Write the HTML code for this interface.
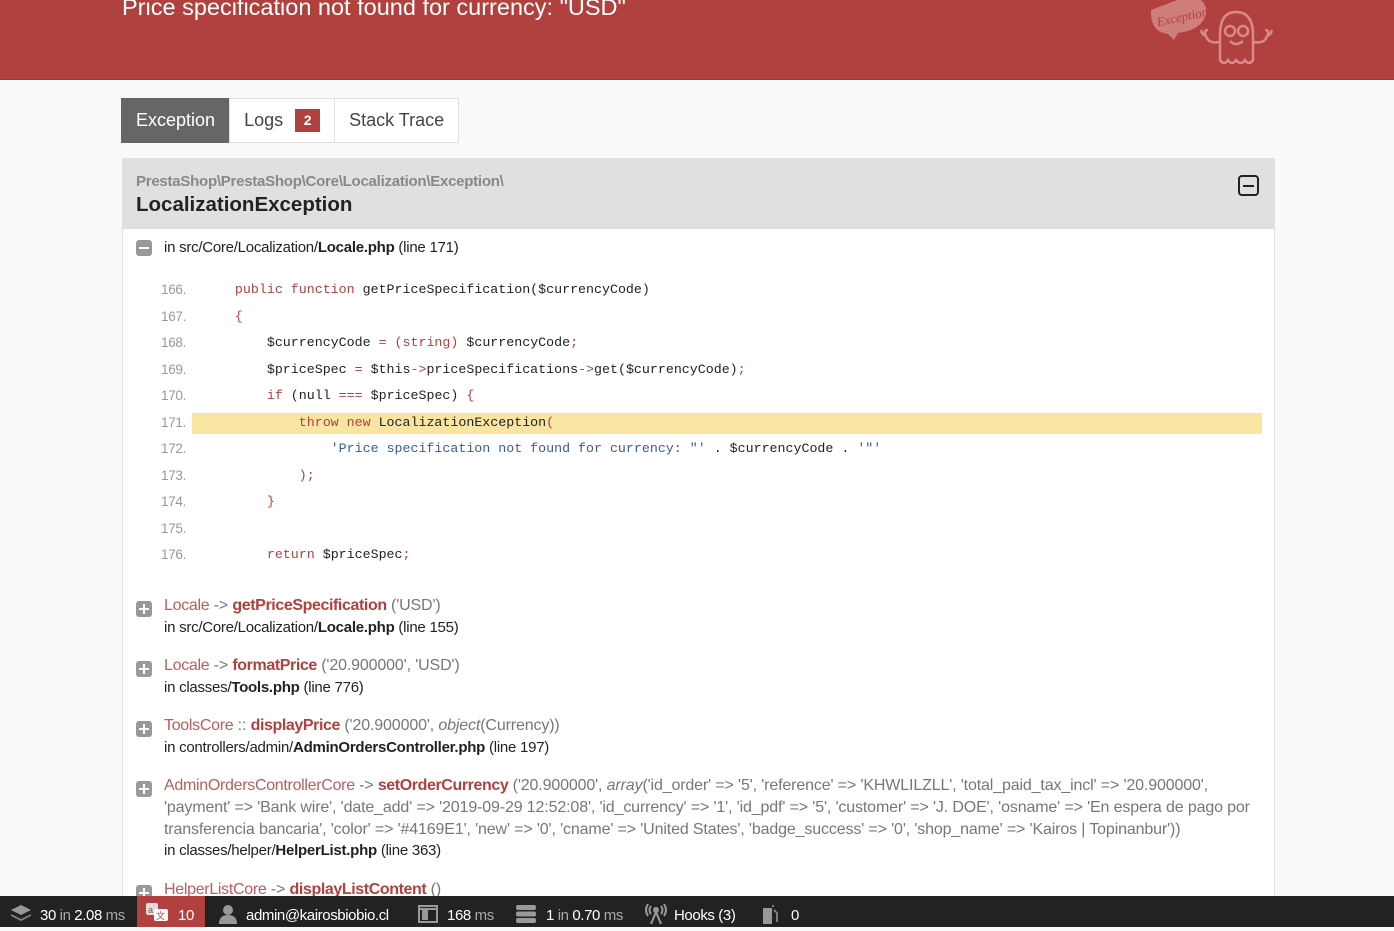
<!DOCTYPE html>
<html><head><meta charset="utf-8"><style>
*{margin:0;padding:0;box-sizing:border-box}
body{width:1394px;height:927px;overflow:hidden;background:#f9f9f9;font-family:"Liberation Sans",Arial,sans-serif;color:#222;position:relative}
.hdr{position:absolute;left:0;top:0;width:1394px;height:80px;background:#b0413e;border-bottom:1px solid #9a3a37}
.hdr h1{position:absolute;left:122px;top:-6px;color:#fff;font-size:23.5px;font-weight:normal;white-space:nowrap}
.tabs{position:absolute;left:121px;top:98px;height:45px;display:flex}
.tab{height:45px;border:1px solid #e0e0e0;background:#fff;font-size:18px;line-height:43px;padding:0 14px;color:#444;margin-left:-1px}
.tab.act{background:#666;color:#fff;border-color:#666;margin-left:0}
.badge{display:inline-block;background:#b0413e;color:#fff;font-size:14px;font-weight:bold;width:25px;height:23px;line-height:23px;text-align:center;margin-left:12px;vertical-align:1px}
.panel{position:absolute;left:122px;top:158px;width:1153px;height:760px;background:#fff;border:1px solid #e0e0e0}
.ph{height:70px;background:#e0e0e0;position:relative}
.ns{position:absolute;left:13px;top:14px;font-size:15px;color:#888;font-weight:bold;letter-spacing:-.25px}
.cls{position:absolute;left:13px;top:34px;font-size:20.5px;font-weight:bold;color:#222}
.tog{position:absolute;left:1115px;top:16px;width:21px;height:21px;border:2px solid #222;border-radius:4px}
.tog:after{content:"";position:absolute;left:3px;right:3px;top:7.5px;height:2px;background:#222}
.ico{position:absolute;left:13px;width:16px;height:16px;background:#999;border-radius:3px}
.ico:before{content:"";position:absolute;left:3px;right:3px;top:7px;height:2px;background:#fff}
.ico.p:after{content:"";position:absolute;top:3px;bottom:3px;left:7px;width:2px;background:#fff}
.t{position:absolute;left:41px;font-size:15px;white-space:nowrap;color:#222;letter-spacing:-.25px}
.code{position:absolute;left:0;top:118px;width:1153px;font-family:"Liberation Mono",monospace;font-size:13.3px}
.ln{height:26.5px;line-height:26.5px;position:relative;white-space:pre}
.ln .n{position:absolute;left:38px;color:#999;font-family:"Liberation Sans",sans-serif;font-size:13.5px;letter-spacing:-.3px}
.ln .c{position:absolute;left:80px;color:#222}
.hl{position:absolute;left:69px;width:1070px;top:3px;height:21px;background:#f7e5a1}
.k{color:#b0413e}.s{color:#3b5b9e}
.fr{position:absolute;left:0;width:1153px}
.fr .l1{position:absolute;left:41px;top:0;font-size:16px;color:#777;white-space:nowrap;letter-spacing:-.14px}
.fr .l2{position:absolute;left:41px;font-size:15px;color:#222;white-space:nowrap;letter-spacing:-.25px}
.cl{color:#b0413e;opacity:.85;letter-spacing:-.3px}.m{color:#b0413e;font-weight:bold;letter-spacing:-.4px}
.bar{position:absolute;left:0;top:896px;width:1394px;height:31px;background:#222;color:#fff;font-size:15px}
.bar span.i{position:absolute;top:4px;line-height:31px;white-space:nowrap;letter-spacing:-.4px}
.g{color:#aaa}
</style></head><body>
<div class="hdr"><h1>Price specification not found for currency: "USD"</h1>
<svg style="position:absolute;left:1148px;top:0" width="130" height="70" viewBox="0 0 130 70" fill="none" stroke="#d88a88" stroke-width="2.5">
<path d="M3 10 Q2 32 20 34 L26 40 L30 33 Q54 30 58 14 Q60 -2 40 -4 Z" fill="#cf7e7c" stroke="none"/>
<text x="8" y="22" font-family="Liberation Serif" font-style="italic" font-size="13" fill="#b0413e" stroke="none" transform="rotate(-12 30 16)">Exception!</text>
<path d="M72 60 L72 35 Q72 12 88 12 Q105 12 105 35 L105 60 Q101 66 97 60 Q93 66 88 60 Q84 66 80 60 Q76 66 72 60Z"/>
<circle cx="82" cy="31" r="5"/><circle cx="95" cy="31" r="5"/>
<path d="M82 41 Q88 47 95 41"/>
<path d="M72 42 Q60 44 58 36 M58 36 Q55 30 60 30 M58 36 Q52 33 54 30"/>
<path d="M105 42 Q117 44 119 36 M119 36 Q122 30 117 30 M119 36 Q125 33 123 30"/>
</svg></div>
<div class="tabs"><div class="tab act">Exception</div><div class="tab">Logs<span class="badge">2</span></div><div class="tab">Stack Trace</div></div>
<div class="panel">
<div class="ph"><div class="ns">PrestaShop\PrestaShop\Core\Localization\Exception\</div><div class="cls">LocalizationException</div><div class="tog"></div></div>
<div class="ico" style="top:81px"></div>
<div class="t" style="top:80px">in src/Core/Localization/<b>Locale.php</b> (line 171)</div>
<div class="code">
<div class="ln"><span class="n">166.</span><span class="c">    <span class="k">public function</span> getPriceSpecification($currencyCode)</span></div>
<div class="ln"><span class="n">167.</span><span class="c">    <span class="k">{</span></span></div>
<div class="ln"><span class="n">168.</span><span class="c">        $currencyCode <span class="k">=</span> <span class="k">(string)</span> $currencyCode<span class="k">;</span></span></div>
<div class="ln"><span class="n">169.</span><span class="c">        $priceSpec <span class="k">=</span> $this<span class="k">-&gt;</span>priceSpecifications<span class="k">-&gt;</span>get($currencyCode)<span class="k">;</span></span></div>
<div class="ln"><span class="n">170.</span><span class="c">        <span class="k">if</span> (null <span class="k">===</span> $priceSpec) <span class="k">{</span></span></div>
<div class="ln"><div class="hl"></div><span class="n">171.</span><span class="c">            <span class="k">throw new</span> LocalizationException<span class="k">(</span></span></div>
<div class="ln"><span class="n">172.</span><span class="c">                <span class="s">'Price specification not found for currency: "'</span> . $currencyCode . <span class="s">'"'</span></span></div>
<div class="ln"><span class="n">173.</span><span class="c">            <span class="k">);</span></span></div>
<div class="ln"><span class="n">174.</span><span class="c">        <span class="k">}</span></span></div>
<div class="ln"><span class="n">175.</span><span class="c"> </span></div>
<div class="ln"><span class="n">176.</span><span class="c">        <span class="k">return</span> $priceSpec<span class="k">;</span></span></div>
</div>
<div class="fr" style="top:438px"><div class="ico p" style="top:4px"></div><div class="l1"><span class="cl">Locale</span> -&gt; <span class="m">getPriceSpecification</span> ('USD')</div><div class="l2" style="top:22px">in src/Core/Localization/<b>Locale.php</b> (line 155)</div></div>
<div class="fr" style="top:498px"><div class="ico p" style="top:4px"></div><div class="l1"><span class="cl">Locale</span> -&gt; <span class="m">formatPrice</span> ('20.900000', 'USD')</div><div class="l2" style="top:22px">in classes/<b>Tools.php</b> (line 776)</div></div>
<div class="fr" style="top:558px"><div class="ico p" style="top:4px"></div><div class="l1"><span class="cl">ToolsCore</span> :: <span class="m">displayPrice</span> ('20.900000', <i>object</i>(Currency))</div><div class="l2" style="top:22px">in controllers/admin/<b>AdminOrdersController.php</b> (line 197)</div></div>
<div class="fr" style="top:618px"><div class="ico p" style="top:4px"></div><div class="l1" style="line-height:22px;top:-2px"><span class="cl">AdminOrdersControllerCore</span> -&gt; <span class="m">setOrderCurrency</span> ('20.900000', <i>array</i>('id_order' =&gt; '5', 'reference' =&gt; 'KHWLILZLL', 'total_paid_tax_incl' =&gt; '20.900000',<br>'payment' =&gt; 'Bank wire', 'date_add' =&gt; '2019-09-29 12:52:08', 'id_currency' =&gt; '1', 'id_pdf' =&gt; '5', 'customer' =&gt; 'J. DOE', 'osname' =&gt; 'En espera de pago por<br>transferencia bancaria', 'color' =&gt; '#4169E1', 'new' =&gt; '0', 'cname' =&gt; 'United States', 'badge_success' =&gt; '0', 'shop_name' =&gt; 'Kairos | Topinanbur'))</div><div class="l2" style="top:65px">in classes/helper/<b>HelperList.php</b> (line 363)</div></div>
<div class="fr" style="top:722px"><div class="ico p" style="top:4px"></div><div class="l1"><span class="cl">HelperListCore</span> -&gt; <span class="m">displayListContent</span> ()</div></div>
</div>
<div class="bar">
<svg style="position:absolute;left:11px;top:9px" width="20" height="19" viewBox="0 0 20 19" fill="#999"><path d="M10 0 L20 5 L10 10 L0 5Z"/><path d="M0 9 L10 14 L20 9 L20 11 L10 16 L0 11Z" opacity=".8"/></svg>
<span class="i" style="left:40px">30 <span class="g">in</span> 2.08 <span class="g">ms</span></span>
<div style="position:absolute;left:137px;top:0;width:68px;height:31px;background:#b0413e"></div>
<svg style="position:absolute;left:146px;top:7px" width="24" height="20" viewBox="0 0 24 20"><rect x="0" y="0" width="12" height="12" rx="2" fill="#ddd"/><rect x="8" y="6" width="14" height="12" rx="2" fill="#fff"/><text x="2" y="10" font-size="9" fill="#b0413e">a</text><text x="10" y="16" font-size="9" fill="#b0413e">文</text></svg>
<span class="i" style="left:178px">10</span>
<svg style="position:absolute;left:219px;top:9px" width="18" height="19" viewBox="0 0 18 19" fill="#999"><circle cx="9" cy="5" r="5"/><path d="M0 19 Q0 10 9 10 Q18 10 18 19Z"/></svg>
<span class="i" style="left:246px">admin@kairosbiobio.cl</span>
<svg style="position:absolute;left:418px;top:9px" width="20" height="18" viewBox="0 0 20 18" fill="none" stroke="#999" stroke-width="2"><rect x="1" y="1" width="18" height="16"/><rect x="5" y="6" width="4" height="8" fill="#999"/><path d="M1 4 H19"/></svg>
<span class="i" style="left:447px">168 <span class="g">ms</span></span>
<svg style="position:absolute;left:516px;top:9px" width="20" height="18" viewBox="0 0 20 18" fill="#999"><rect x="0" y="0" width="20" height="5" rx="2"/><rect x="0" y="6.5" width="20" height="5" rx="2"/><rect x="0" y="13" width="20" height="5" rx="2"/></svg>
<span class="i" style="left:546px">1 <span class="g">in</span> 0.70 <span class="g">ms</span></span>
<svg style="position:absolute;left:645px;top:8px" width="22" height="20" viewBox="0 0 22 20" fill="none" stroke="#999" stroke-width="2"><circle cx="11" cy="6" r="2" fill="#999"/><path d="M11 8 L6 20 M11 8 L16 20 M6 2 Q3 6 6 10 M16 2 Q19 6 16 10 M3 0 Q-1 6 3 12 M19 0 Q23 6 19 12"/></svg>
<span class="i" style="left:674px">Hooks (3)</span>
<svg style="position:absolute;left:763px;top:8px" width="16" height="20" viewBox="0 0 16 20" fill="#999"><rect x="0" y="4" width="9" height="16"/><path d="M11 6 L14 9 L14 18 M9 2 L11 2" stroke="#999" fill="none" stroke-width="1.5"/></svg>
<span class="i" style="left:791px">0</span>
</div>
</body></html>
